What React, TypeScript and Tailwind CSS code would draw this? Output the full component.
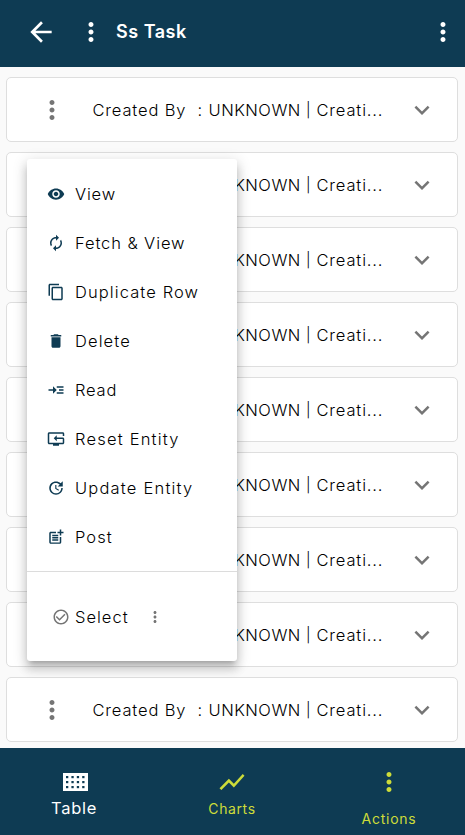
import type { IconType } from "react-icons";
import {
  MdArrowBack,
  MdAutorenew,
  MdCheckCircleOutline,
  MdContentCopy,
  MdDelete,
  MdExpandMore,
  MdMoreVert,
  MdPostAdd,
  MdReadMore,
  MdResetTv,
  MdShowChart,
  MdUpdate,
  MdVisibility,
} from "react-icons/md";

const menu: { label: string; icon: IconType; spacing: string }[] = [
  { label: "View", icon: MdVisibility, spacing: "tracking-[0.8px]" },
  { label: "Fetch & View", icon: MdAutorenew, spacing: "tracking-[0.9px]" },
  { label: "Duplicate Row", icon: MdContentCopy, spacing: "tracking-[1.1px]" },
  { label: "Delete", icon: MdDelete, spacing: "tracking-[1.1px]" },
  { label: "Read", icon: MdReadMore, spacing: "tracking-[0.8px]" },
  { label: "Reset Entity", icon: MdResetTv, spacing: "tracking-[1.2px]" },
  { label: "Update Entity", icon: MdUpdate, spacing: "tracking-[1.2px]" },
  { label: "Post", icon: MdPostAdd, spacing: "tracking-[1.1px]" },
];

function Row() {
  return (
    <div className="flex h-[65px] shrink-0 items-center rounded-[5px] border border-[#dedede] bg-white">
      <MdMoreVert className="ml-[30px] size-[30px] shrink-0 text-[#757575]" />
      <div className="ml-[25.5px] flex w-[300px] shrink-0 whitespace-pre text-[16.5px] font-light leading-6 text-black">
        <span className="w-[105px] tracking-[0.85px]">Created By</span>
        <span className="w-[11px]">:</span>
        <span className="w-[97.5px] tracking-[0.5px]">UNKNOWN</span>
        <span className="w-[10.5px] text-[14.5px]">|</span>
        <span className="tracking-[0.85px]">Creati...</span>
      </div>
      <MdExpandMore className="ml-[14.5px] size-[30px] shrink-0 text-[#757575]" />
    </div>
  );
}

function TableIcon() {
  const xs = [3, 8.4, 13.8, 19.2];
  const ys = [3, 8, 13];
  return (
    <svg width="25" height="18" viewBox="0 0 25 18">
      <rect width="25" height="18" fill="white" />
      {ys.map((y) =>
        xs.map((x) => <rect key={`${x}-${y}`} x={x} y={y} width="2.3" height="2.2" fill="#0e3b53" />)
      )}
    </svg>
  );
}

export default function App() {
  return (
    <div className="relative flex h-[835px] w-[465px] flex-col overflow-hidden bg-[#fafafa] font-[Inter,sans-serif]">
      <header className="flex h-[67px] shrink-0 items-center bg-[#0e3b53] pb-[3px] text-white">
        <MdArrowBack className="ml-[25px] size-8" />
        <MdMoreVert className="ml-[19px] size-[30px]" />
        <h1 className="ml-[10px] text-[18px] font-semibold leading-6 tracking-[0.5px]">Ss Task</h1>
        <MdMoreVert className="ml-auto mr-[7px] size-[30px]" />
      </header>

      <main className="flex h-[681px] shrink-0 flex-col gap-[10px] pl-[6px] pr-[7px] pt-[10px]">
        {Array.from({ length: 9 }, (_, i) => (
          <Row key={i} />
        ))}
      </main>

      <footer className="flex h-[87px] shrink-0 bg-[#0e3b53] text-[#cddc39]">
        <div className="flex w-[148px] flex-col items-center pt-[25px] pl-[2px] text-white">
          <TableIcon />
          <span className="mt-[5px] -ml-[2px] text-[16.5px] leading-6 tracking-[0.7px]">Table</span>
        </div>
        <div className="flex w-[168px] flex-col items-center pt-[19px]">
          <MdShowChart className="size-[30px]" />
          <span className="mt-[2px] text-[14px] leading-5 tracking-[0.6px]">Charts</span>
        </div>
        <div className="flex w-[146px] flex-col items-center pt-[19px]">
          <MdMoreVert className="size-[30px]" />
          <span className="mt-[12px] text-[14px] leading-5 tracking-[0.75px]">Actions</span>
        </div>
      </footer>

      <div className="absolute left-[27px] top-[159px] flex h-[502px] w-[210px] flex-col rounded-[3px] bg-white pt-[10px] text-[16.5px] font-light text-black shadow-[0_5px_5px_-3px_rgba(0,0,0,0.2),0_8px_10px_1px_rgba(0,0,0,0.14),0_3px_14px_2px_rgba(0,0,0,0.12)]">
        {menu.map(({ label, icon: Icon, spacing }) => (
          <div key={label} className="flex h-[49px] shrink-0 items-center pl-[20px]">
            <Icon className="size-[18px] shrink-0 text-[#0e3b53]" />
            <span className={`ml-[10px] leading-6 ${spacing}`}>{label}</span>
          </div>
        ))}
        <div className="mt-[10px] border-t border-[#dcdcdc]" />
        <div className="flex h-[89px] items-center pl-[25px]">
          <MdCheckCircleOutline className="size-[18px] text-[#757575]" />
          <span className="ml-[5px] w-[71px] leading-6 tracking-[1px]">Select</span>
          <MdMoreVert className="size-[18px] text-[#757575]" />
        </div>
      </div>
    </div>
  );
}
